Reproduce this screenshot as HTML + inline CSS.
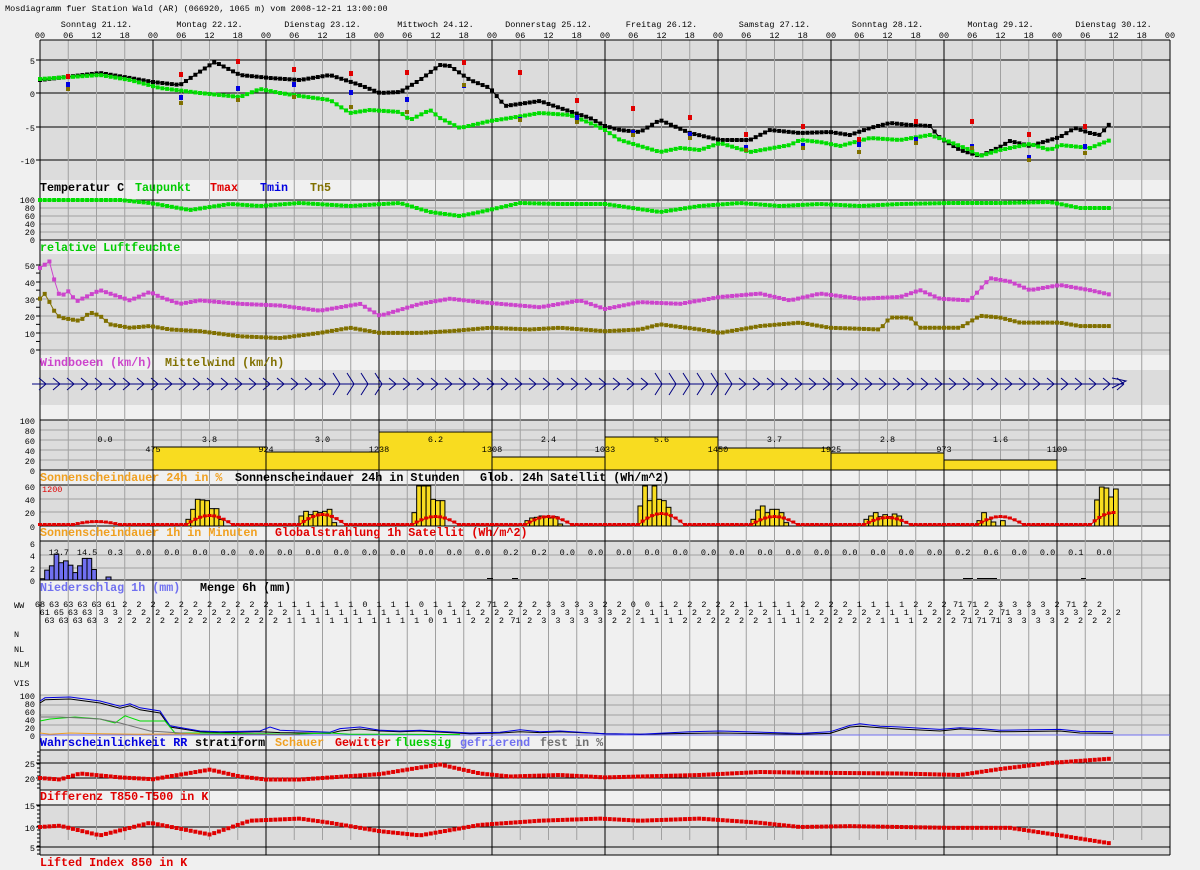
<!DOCTYPE html>
<html><head><meta charset="utf-8"><style>
html,body{margin:0;padding:0;background:#f0f0f0;width:1200px;height:870px;overflow:hidden}
svg{display:block}
text{font-family:"Liberation Mono","DejaVu Sans Mono",monospace}
.s{font-size:8.5px}
.l{font-size:11.7px;font-weight:bold}
</style></head><body>
<svg id="c" width="1200" height="870" xmlns="http://www.w3.org/2000/svg"></svg>
<script>
const S=document.getElementById('c');let o='';
const X=h=>40+h*113/24;
function R(x,y,w,h,f,st){o+=`<rect x="${x}" y="${y}" width="${w}" height="${h}" fill="${f}"${st?` stroke="${st}" stroke-width="1"`:''}/>`}
function L(x1,y1,x2,y2,c,w){o+=`<line x1="${x1}" y1="${y1}" x2="${x2}" y2="${y2}" stroke="${c}" stroke-width="${w||1}"/>`}
function T(x,y,t,c,cls,a){o+=`<text x="${x}" y="${y}" fill="${c||'#000'}" class="${cls||'s'}"${a?` text-anchor="${a}"`:''}>${t}</text>`}
[[40,180],[200,240],[254,355],[370,405],[420,470],[485,526],[541,580],[695,735],[750,790],[804,855]].forEach(p=>R(40,p[0],1130,p[1]-p[0],'#dcdcdc'));
function hg(ys,c){ys.forEach(y=>L(40,y,1170,y,c))}
hg([60,93,127,160],'#000');
hg([208,216,224,232],'#a0a0a0');hg([200,240],'#000');
hg([265,282,299,316,333],'#a0a0a0');hg([350],'#a0a0a0');
hg([430,440,450,460],'#a0a0a0');hg([420,470],'#000');
hg([499,512],'#a0a0a0');hg([485,526],'#000');
hg([555,568],'#a0a0a0');hg([541,580],'#000');
hg([705,715,725],'#a0a0a0');hg([695],'#a0a0a0');
hg([763,778],'#000');hg([750,790],'#000');
hg([805,827,847],'#000');
for(let k=0;k<=40;k++){const x=X(k*6);if(k%4==0)L(x,40,x,855,'#000');else L(x,40,x,840,'#a0a0a0');}
L(40,40,40,855,'#000');L(1170,40,1170,855,'#000');L(40,40,1170,40,'#000');L(40,855,1170,855,'#000');
T(5,11,'Mosdiagramm fuer Station Wald (AR) (066920, 1065 m) vom 2008-12-21 13:00:00','#000');
const days=['Sonntag 21.12.','Montag 22.12.','Dienstag 23.12.','Mittwoch 24.12.','Donnerstag 25.12.','Freitag 26.12.','Samstag 27.12.','Sonntag 28.12.','Montag 29.12.','Dienstag 30.12.'];
days.forEach((d,i)=>T(X(i*24+12),27,d,'#000','s','middle'));
for(let k=0;k<=40;k++)T(X(k*6),38,['00','06','12','18'][k%4],'#000','s','middle');
function yl(y,t){T(35,y+4,t,'#000','s','end');L(36,y,40,y,'#000')}
[[60,'5'],[93,'0'],[127,'-5'],[160,'-10']].forEach(a=>yl(a[0],a[1]));
[[200,'100'],[208,'80'],[216,'60'],[224,'40'],[232,'20'],[240,'0']].forEach(a=>{T(35,a[0]+3,a[1],'#000','s','end')});
[[265,'50'],[282,'40'],[299,'30'],[316,'20'],[333,'10'],[350,'0']].forEach(a=>yl(a[0],a[1]));
for(let v=5;v<55;v+=10)L(36,350-v*1.71,40,350-v*1.71,'#000');
[[420,'100'],[430,'80'],[440,'60'],[450,'40'],[460,'20'],[470,'0']].forEach(a=>T(35,a[0]+4,a[1],'#000','s','end'));
[[486,'60'],[499,'40'],[512,'20'],[526,'0']].forEach(a=>T(35,a[0]+4,a[1],'#000','s','end'));
[[543,'6'],[555,'4'],[568,'2'],[580,'0']].forEach(a=>T(35,a[0]+4,a[1],'#000','s','end'));
[[696,'100'],[704,'80'],[712,'60'],[720,'40'],[728,'20'],[736,'0']].forEach(a=>T(35,a[0]+3,a[1],'#000','s','end'));
[[763,'25'],[778,'20']].forEach(a=>yl(a[0],a[1]));for(let y=752;y<790;y+=4)L(37,y,40,y,'#000');
[[805,'15'],[827,'10'],[847,'5']].forEach(a=>yl(a[0],a[1]));for(let y=806;y<855;y+=4)L(37,y,40,y,'#000');
function ser(pts,c,step,sz,line){let arr=[];for(let x=pts[0][0];x<=pts[pts.length-1][0]+0.1;x+=step){let i=0;while(i<pts.length-2&&pts[i+1][0]<x)i++;const a=pts[i],b=pts[i+1];const t=(x-a[0])/(b[0]-a[0]);arr.push([x,a[1]+(b[1]-a[1])*Math.max(0,Math.min(1,t))]);}
if(line)o+=`<polyline fill="none" stroke="${c}" stroke-width="1" points="${arr.map(p=>p[0].toFixed(1)+','+p[1].toFixed(1)).join(' ')}"/>`;
arr.forEach(p=>R(p[0]-sz/2,p[1]-sz/2,sz,sz,c));}
const st=113/24;
ser([[40,80],[100,73],[130,78],[153,82],[180,85],[210,65],[215,62],[240,75],[270,78],[300,80],[330,75],[360,85],[380,93],[400,92],[420,80],[440,65],[450,66],[470,80],[490,88],[505,106],[540,101],[560,108],[590,118],[605,126],[620,130],[640,132],[660,120],[690,133],[720,140],[750,140],[770,130],[800,133],[830,132],[850,135],[870,128],[890,123],[910,125],[930,126],[940,138],[960,150],[980,156],[1000,147],[1010,141],[1030,146],[1060,137],[1075,128],[1090,133],[1100,135],[1113,120]],'#000',st,4,1);
ser([[40,79],[100,75],[130,80],[160,88],[200,93],[240,97],[260,89],[280,93],[300,96],[330,100],[350,113],[370,110],[400,112],[410,120],[430,110],[440,118],[460,128],[490,121],[510,118],[540,113],[570,115],[590,123],[605,130],[620,140],[660,152],[680,148],[700,150],[720,143],[750,152],[790,145],[800,140],[820,142],[840,146],[870,138],[900,140],[930,135],[945,140],[970,150],[980,156],[1000,150],[1030,144],[1050,150],[1060,145],[1090,148],[1113,139]],'#00dd00',st,4,1);
const mm=[[68,77,85,89],[181,75,98,103],[238,62,89,100],[294,70,85,97],[351,74,93,107],[407,73,100,112],[464,63,86,85],[520,73,120,120],[577,101,118,122],[633,109,133,135],[690,118,135,138],[746,135,148,150],[803,127,146,148],[859,140,145,152],[916,122,140,143],[972,122,147,148],[1029,135,158,160],[1085,127,147,153]];
mm.forEach(m=>{R(m[0]-2,m[1]-3,4,5,'#e00000');R(m[0]-2,m[2]-3,4,5,'#0000e0');R(m[0]-2,m[3]-2,4,4,'#807000')});
T(40,191,'Temperatur C','#000','l');T(135,191,'Taupunkt','#00cc00','l');T(210,191,'Tmax','#e00000','l');T(260,191,'Tmin','#0000e0','l');T(310,191,'Tn5','#807000','l');
T(40,251,'relative Luftfeuchte','#00cc00','l');
T(40,366,'Windboeen (km/h)','#cc44cc','l');T(165,366,'Mittelwind (km/h)','#807000','l');
ser([[40,200],[120,200],[150,203],[190,210],[230,204],[260,206],[300,203],[350,206],[400,203],[430,212],[460,216],[480,212],[520,203],[560,204],[605,204],[660,212],[700,206],[740,203],[780,206],[820,204],[860,206],[900,204],[950,203],[1000,203],[1050,202],[1080,208],[1113,208]],'#00dd00',st,4,1);
const wy=v=>350-v*1.71;
ser([[40,48],[50,52],[55,39],[60,31],[70,35],[75,28],[100,35],[130,29],[150,34],[160,31],[180,27],[200,29],[240,27],[280,26],[320,23],[360,27],[380,20],[420,27],[450,30],[480,28],[500,27],[540,25],[580,29],[605,24],[640,28],[680,27],[720,31],[760,33],[790,29],[820,33],[860,30],[900,31],[920,35],[940,30],[970,29],[990,42],[1010,40],[1030,35],[1060,38],[1090,35],[1113,32]].map(p=>[p[0],wy(p[1])]),'#cc44cc',st,4,1);
ser([[40,30],[45,33],[55,22],[60,19],[80,17],[90,22],[100,20],[110,15],[130,13],[150,14],[170,12],[200,11],[240,8],[280,7],[320,10],[350,13],[380,10],[420,10],[450,11],[490,13],[530,12],[560,13],[605,11],[640,12],[660,15],[700,12],[720,10],[760,14],[800,16],[830,13],[880,12],[890,19],[910,19],[920,13],[960,13],[980,20],[1000,19],[1020,16],[1060,16],[1080,14],[1113,14]].map(p=>[p[0],wy(p[1])]),'#807000',st,4,1);
let wb='';for(let x=32;x<1120;x+=14){const j=(x>320&&x<380)||(x>640&&x<720)?5:0;wb+=`M${x} 384 L${x+14} 384 M${x+14} 384 L${x+7} ${378-j} M${x+14} 384 L${x+7} ${390+j} `;}
o+=`<path d="${wb}" stroke="#000080" stroke-width="1" fill="none"/>`;o+=`<path d="M1112 378 L1126 381 L1112 388" stroke="#000080" fill="none"/>`;
const s24=[null,[447,'3.8','475'],[452,'3.0','924'],[432,'6.2','1238'],[457,'2.4','1308'],[437,'5.6','1033'],[448,'3.7','1450'],[453,'2.8','1925'],[460,'1.6','973']];
T(105,442,'0.0','#000','s','middle');
s24.forEach((d,i)=>{if(!d)return;R(X(i*24),d[0],113,470-d[0],'#f8dc20','#000');T(X(i*24+12),442,d[1],'#000','s','middle');T(X(i*24),452,d[2],'#000','s','middle')});
T(X(9*24),452,'1109','#000','s','middle');
T(40,481,'Sonnenscheindauer 24h in %','#f0a020','l');T(235,481,'Sonnenscheindauer 24h in Stunden','#000','l');T(480,481,'Glob. 24h Satellit (Wh/m^2)','#000','l');
T(42,492,'1200','#e00000');
const s1=[[],[10,25,40,39,38,26,26,10],[15,22,17,22,20,22,25,5],[20,60,60,60,40,38,38,0],[8,12,13,15,14,12,14,3],[30,60,38,60,40,38,28,0],[10,24,30,20,25,25,20,5],[10,15,20,14,17,14,18,15],[8,20,10,6,0,8],[]];
s1.forEach((d,i)=>d.forEach((v,k)=>{if(v>0)R(X(i*24+7+k),526-v*0.667,st,v*0.667,'#f8dc20','#000')}));
R(X(9*24+8),500,st,26,'#f8dc20','#000');R(X(9*24+9),487,st,39,'#f8dc20','#000');R(X(9*24+10),488,st,38,'#f8dc20','#000');R(X(9*24+11),497,st,29,'#f8dc20','#000');R(X(9*24+12),489,st,37,'#f8dc20','#000');
let gp=[];for(let h=0;h<=228;h++){const hd=h%24;let v=0;if(hd>=7&&hd<=17)v=Math.sin((hd-7)/10*Math.PI);const amp=[3,9,10,8,8,11,8,7,8,12][Math.floor(h/24)]||0;gp.push([X(h),525-v*amp]);}
gp.forEach(p=>R(p[0]-2,p[1]-2,4,3,'#e00000'));o+=`<polyline fill="none" stroke="#e00000" points="${gp.map(p=>p[0].toFixed(1)+','+p[1].toFixed(1)).join(' ')}"/>`;
T(40,536,'Sonnenscheindauer 1h in Minuten','#f0a020','l');T(275,536,'Globalstrahlung 1h Satellit (Wh/m^2)','#e00000','l');
[0.2,1.6,2.3,4.2,2.8,3.1,2.4,1.2,2.3,3.5,3.5,1.7].forEach((v,k)=>R(40+k*4.7,580-v*6.17,4.7,v*6.17,'#7070f0','#000'));R(106,577,5,3,'#7070f0','#000');
const pr=['13.7','14.5','0.3','0.0','0.0','0.0','0.0','0.0','0.0','0.0','0.0','0.0','0.0','0.0','0.0','0.0','0.2','0.2','0.0','0.0','0.0','0.0','0.0','0.0','0.0','0.0','0.0','0.0','0.0','0.0','0.0','0.0','0.2','0.6','0.0','0.0','0.1','0.0'];
pr.forEach((t,k)=>T(X(k*6+4),555,t,'#000','s','middle'));
R(487,578,6,1,'#000');R(512,578,6,1,'#000');R(963,578,10,1,'#000');R(977,578,20,1,'#000');R(1081,578,5,1,'#000');
T(40,591,'Niederschlag 1h (mm)','#7070f0','l');T(200,591,'Menge 6h (mm)','#000','l');
T(14,608,'WW','#000','s');T(14,637,'N','#000','s');T(14,652,'NL','#000','s');T(14,667,'NLM','#000','s');T(14,686,'VIS','#000','s');
const r1='68 63 63 63 63 61 2 2 2 2 2 2 2 2 2 2 2 1 1 1 1 1 1 0 1 1 1 0 1 1 2 2 71 2 2 2 3 3 3 3 2 2 0 0 1 2 2 2 2 2 1 1 1 1 2 2 2 2 1 1 1 1 2 2 2 71 71 2 3 3 3 3 2 71 2 2'.split(' ');
const r2='61 65 63 63 3 3 2 2 2 2 2 2 2 2 2 2 2 2 1 1 1 1 1 1 1 1 1 1 0 1 1 2 2 2 2 2 3 3 3 3 3 2 2 1 1 1 2 2 2 2 2 2 1 1 1 2 2 2 2 2 1 1 1 2 2 2 2 2 71 3 3 3 3 3 2 2 2'.split(' ');
const r3='63 63 63 63 3 2 2 2 2 2 2 2 2 2 2 2 2 1 1 1 1 1 1 1 1 1 1 0 1 1 2 2 2 71 2 3 3 3 3 3 2 2 1 1 1 2 2 2 2 2 2 1 1 1 2 2 2 2 2 1 1 1 2 2 2 71 71 71 3 3 3 3 2 2 2 2'.split(' ');
r1.forEach((t,k)=>T(X(k*3),607,t,'#000','s','middle'));r2.forEach((t,k)=>T(X(k*3+1),615,t,'#000','s','middle'));r3.forEach((t,k)=>T(X(k*3+2),623,t,'#000','s','middle'));
function pl(pts,c){o+=`<polyline fill="none" stroke="${c}" stroke-width="1" points="${pts.map(p=>p[0]+','+(735-p[1]*0.4)).join(' ')}"/>`}
L(40,735,1170,735,'#7070f0');
pl([[40,80],[45,88],[70,90],[100,80],[120,67],[130,73],[140,63],[160,55],[170,20],[200,8],[220,6],[260,8],[280,6],[330,4],[340,10],[360,15],[380,10],[400,8],[420,10],[470,3],[500,5],[520,8],[540,6],[560,8],[605,3],[640,2],[690,4],[720,5],[800,2],[830,4],[850,20],[860,22],[880,18],[900,15],[940,10],[960,15],[980,12],[1000,8],[1060,10],[1080,5],[1113,4]],'#000');
pl([[40,85],[45,93],[70,95],[100,85],[120,72],[130,78],[140,68],[160,60],[170,23],[200,10],[220,8],[260,10],[270,20],[280,12],[330,7],[340,16],[360,20],[380,12],[400,10],[420,12],[470,5],[500,7],[520,13],[540,8],[560,10],[605,3],[640,2],[690,8],[720,10],[800,4],[830,8],[850,24],[860,28],[880,22],[900,20],[940,14],[960,18],[980,16],[1000,12],[1060,14],[1080,9],[1113,8]],'#0000e0');
pl([[40,35],[50,40],[75,45],[100,40],[115,30],[125,48],[140,35],[165,35],[175,5],[200,5],[260,3],[290,2],[330,5],[350,2],[400,2],[460,1]],'#00dd00');
pl([[40,45],[60,45],[100,40],[120,30],[150,10],[200,2],[300,1]],'#707070');
pl([[40,5],[50,2],[70,5],[100,3],[140,2],[200,3]],'#f0a020');
T(40,746,'Wahrscheinlichkeit RR','#0000e0','l');T(195,746,'stratiform','#000','l');T(275,746,'Schauer','#f0a020','l');T(335,746,'Gewitter','#e00000','l');T(395,746,'fluessig','#00cc00','l');T(460,746,'gefrierend','#7070f0','l');T(540,746,'fest in %','#707070','l');
function dots(pts,f){for(let x=pts[0][0];x<=pts[pts.length-1][0];x+=st){let i=0;while(i<pts.length-2&&pts[i+1][0]<x)i++;const a=pts[i],b=pts[i+1];const y=a[1]+(b[1]-a[1])*(x-a[0])/(b[0]-a[0]);R(x-2,f(y)-2,4,4,'#e00000')}}
dots([[40,20],[60,19.5],[80,21.5],[120,20.2],[153,19.6],[210,22.8],[240,20.5],[266,19.5],[300,19.5],[380,21.3],[420,23.5],[440,24.5],[480,21.5],[510,20.5],[560,21],[605,20.2],[700,21],[760,22],[800,21.8],[900,21.5],[960,21],[1000,23],[1050,25],[1113,26.5]],v=>778-(v-20)*3);
T(40,800,'Differenz T850-T500 in K','#e00000','l');
dots([[40,10],[60,10.3],[100,8],[150,11],[210,8.2],[250,11.5],[300,12],[330,11],[380,9],[420,8],[480,10.5],[540,11.5],[600,12],[640,11.5],[700,12],[760,11],[800,10],[850,10.2],[950,9.8],[1010,9.8],[1060,8],[1113,6]],v=>827-(v-10)*4.2);
T(40,866,'Lifted Index 850 in K','#e00000','l');
S.innerHTML=o;
</script>
</body></html>
